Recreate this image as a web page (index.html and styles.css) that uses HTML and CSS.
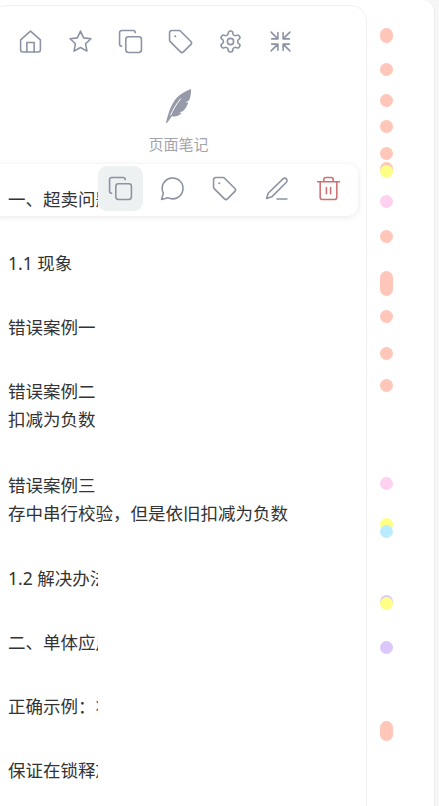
FILE: index.html
```html
<!DOCTYPE html>
<html>

<head>
	<title>页面笔记</title>
	<link rel="stylesheet" href="styles.css">
</head>

<body>
	<div class="shell">
		<div class="note-panel">
			<div class="head-icons">
				<button class="head-btn">
					<svg class="icon" viewBox="0 0 24 24"><path d="M2.5 10.5 12 2l9.500 8.500V20a2 2 0 0 1-2 2h-15a2 2 0 0 1-2-2z" /><path d="M8.500 22v-9h7v9" /></svg>
				</button>
				<button class="head-btn">
					<svg class="icon" viewBox="0 0 24 24"><path d="m12 2 3 6.500 7 .9-5.100 4.800 1.300 7L12 17.800l-6.200 3.400 1.300-7L2 9.400l7-.9z" /></svg>
				</button>
				<button class="head-btn">
					<svg class="icon" viewBox="0 0 24 24"><rect x="7.500" y="7.500" width="15" height="15" rx="2.500" /><path d="M3.500 16.500A2 2 0 0 1 1.500 14.500v-11a2 2 0 0 1 2-2h11a2 2 0 0 1 2 2" /></svg>
				</button>
				<button class="head-btn">
					<svg class="icon" viewBox="0 0 24 24"><path d="M1.500 3.500a2 2 0 0 1 2-2h7.200a2 2 0 0 1 1.400.6l9.900 9.900a2 2 0 0 1 0 2.800l-7.200 7.200a2 2 0 0 1-2.800 0l-9.900-9.900a2 2 0 0 1-.6-1.400z" /><circle class="solid" cx="7" cy="7" r="1" /></svg>
				</button>
				<button class="head-btn">
					<svg class="icon" viewBox="0 0 24 24"><path d="M12.220 2h-.44a2 2 0 0 0-2 2v.18a2 2 0 0 1-1 1.730l-.43.25a2 2 0 0 1-2 0l-.15-.08a2 2 0 0 0-2.730.73l-.22.38a2 2 0 0 0 .73 2.730l.15.1a2 2 0 0 1 1 1.720v.51a2 2 0 0 1-1 1.740l-.15.09a2 2 0 0 0-.73 2.730l.22.38a2 2 0 0 0 2.730.73l.15-.08a2 2 0 0 1 2 0l.43.25a2 2 0 0 1 1 1.730V20a2 2 0 0 0 2 2h.44a2 2 0 0 0 2-2v-.18a2 2 0 0 1 1-1.730l.43-.25a2 2 0 0 1 2 0l.15.08a2 2 0 0 0 2.730-.73l.22-.39a2 2 0 0 0-.73-2.730l-.15-.08a2 2 0 0 1-1-1.740v-.5a2 2 0 0 1 1-1.740l.15-.09a2 2 0 0 0 .73-2.730l-.22-.38a2 2 0 0 0-2.730-.73l-.15.08a2 2 0 0 1-2 0l-.43-.25a2 2 0 0 1-1-1.730V4a2 2 0 0 0-2-2z" /><circle cx="12" cy="12" r="3" /></svg>
				</button>
				<button class="head-btn">
					<svg class="icon" viewBox="0 0 24 24"><path d="M3 3l6.500 6.500M3.500 9.500h6v-6M21 3l-6.500 6.500M20.500 9.500h-6v-6M3 21l6.500-6.500M3.500 14.500h6v6M21 21l-6.500-6.500M20.500 14.500h-6v6" /></svg>
				</button>
			</div>

			<div class="note-title">
				<svg class="feather" viewBox="0 0 25 34">
					<path d="M0 34C2 25 5 15 11 8.500 15 4.500 20 2 25 0c.3 4-.5 8-2 11.500l-3.500 1.800 2.800.2c-1 3-2.700 6-5 8.500l-4 1.500 2.500.5c-3 3-6.500 4-10 3.300L1 34z" />
					<path class="slit" d="M4.500 26.500C7 21 10 15 15 9.500" />
				</svg>
				<div class="note-label">页面笔记</div>
			</div>

			<div class="float-bar">
				<button class="bar-btn active">
					<svg class="icon" viewBox="0 0 24 24"><rect x="7.500" y="7.500" width="15" height="15" rx="2.500" /><path d="M3.500 16.500A2 2 0 0 1 1.500 14.500v-11a2 2 0 0 1 2-2h11a2 2 0 0 1 2 2" /></svg>
				</button>
				<button class="bar-btn">
					<svg class="icon" viewBox="0 0 24 24"><path d="M7.500 20.800A10 10 0 1 0 3.200 16.500L1.500 22.500z" /></svg>
				</button>
				<button class="bar-btn">
					<svg class="icon" viewBox="0 0 24 24"><path d="M1.500 3.500a2 2 0 0 1 2-2h7.200a2 2 0 0 1 1.400.6l9.900 9.900a2 2 0 0 1 0 2.800l-7.200 7.200a2 2 0 0 1-2.800 0l-9.900-9.900a2 2 0 0 1-.6-1.400z" /><circle class="solid" cx="7" cy="7" r="1" /></svg>
				</button>
				<button class="bar-btn">
					<svg class="icon" viewBox="0 0 24 24"><path d="M18.500 2.500a2.300 2.300 0 0 1 3.200 3.200L7.500 20l-5 1.500L4 16.500z" /><path d="M12.500 22h9.500" /></svg>
				</button>
				<button class="bar-btn">
					<svg class="icon danger" viewBox="0 0 24 24"><path d="M1.500 5.500h21M7.500 5.500V3.500a2 2 0 0 1 2-2h5a2 2 0 0 1 2 2v2M4 5.500v15a2 2 0 0 0 2 2h12a2 2 0 0 0 2-2v-15M10 11v6M14 11v6" /></svg>
				</button>
			</div>

			<div class="doc">
				<p><span class="cut">一、超卖问题</span></p>
				<p><span class="cut">1.1 现象</span></p>
				<p><span class="cut">错误案例一</span></p>
				<p class="double"><span class="cut">错误案例二</span><br>扣减为负数</p>
				<p class="double"><span class="cut">错误案例三</span><br>存中串行校验，但是依旧扣减为负数</p>
				<p><span class="cut">1.2 解决办法</span></p>
				<p><span class="cut">二、单体应用</span></p>
				<p><span class="cut">正确示例：将</span></p>
				<p><span class="cut">保证在锁释放</span></p>
			</div>
		</div>

		<div class="marks">
			<div class="mark peach" style="top:28px;height:15px"></div>
			<div class="mark peach" style="top:63px"></div>
			<div class="mark peach" style="top:94px"></div>
			<div class="mark peach" style="top:120px"></div>
			<div class="mark peach" style="top:147px"></div>
			<div class="mark peach" style="top:162px"></div>
			<div class="mark yellow" style="top:165px"></div>
			<div class="mark pink" style="top:195px"></div>
			<div class="mark peach" style="top:230px"></div>
			<div class="mark peach" style="top:271px;height:25px"></div>
			<div class="mark peach" style="top:310px"></div>
			<div class="mark peach" style="top:347px"></div>
			<div class="mark peach" style="top:379px"></div>
			<div class="mark pink" style="top:477px"></div>
			<div class="mark yellow" style="top:518px"></div>
			<div class="mark blue" style="top:525px"></div>
			<div class="mark purple" style="top:595px"></div>
			<div class="mark yellow" style="top:597px"></div>
			<div class="mark purple" style="top:641px"></div>
			<div class="mark peach" style="top:721px;height:20px"></div>
		</div>
	</div>
</body>

</html>
```

FILE: styles.css
```css
* {
	box-sizing: border-box;
}

html,
body {
	height: 100%;
}

body {
	margin: 0;
	overflow: hidden;
	background-color: #f6f6f6;
	font-family: "Noto Sans", "Noto Sans CJK SC", sans-serif;
}

button {
	border: none;
	padding: 0;
	background: none;
}

.shell {
	display: flex;
	width: 435px;
	height: 100%;
	background-color: #fff;
	border-right: 1px solid #ececec;
	border-top-right-radius: 12px;
	overflow: hidden;
}

.note-panel {
	position: relative;
	flex: none;
	width: 377px;
	height: 900px;
	margin-top: 5px;
	margin-left: -10px;
	border: 1px solid #f0f0f0;
	border-radius: 16px;
	background-color: #fff;
}

.head-icons {
	display: flex;
	padding: 10px 0 0 14px;
}

.head-btn {
	display: flex;
	align-items: center;
	justify-content: center;
	width: 50px;
	height: 50px;
}

.icon {
	width: 25px;
	height: 25px;
	fill: none;
	stroke: #8b92a3;
	stroke-width: 1.5;
	stroke-linecap: round;
	stroke-linejoin: round;
}

.icon .solid {
	fill: #8b92a3;
	stroke: none;
}

.icon.danger {
	stroke: #cf6f6f;
}

.note-title {
	display: flex;
	flex-direction: column;
	align-items: center;
	padding-top: 23px;
}

.feather {
	width: 25px;
	height: 34px;
	fill: #969aa8;
}

.feather .slit {
	fill: none;
	stroke: #fff;
	stroke-width: 1;
}

.note-label {
	margin-top: 10px;
	font-size: 15px;
	line-height: 22px;
	color: #a1a4ab;
}

.float-bar {
	position: absolute;
	top: 158px;
	left: 0;
	right: 8px;
	display: flex;
	gap: 7px;
	height: 52px;
	padding: 2px 0 0 107px;
	background-color: #fff;
	border-radius: 10px;
	box-shadow: 0 1px 6px rgba(0, 0, 0, 0.1);
}

.bar-btn {
	display: flex;
	align-items: center;
	justify-content: center;
	width: 45px;
	height: 45px;
	border-radius: 9px;
}

.bar-btn.active {
	background-color: #eef1f2;
}

.doc {
	position: relative;
	margin-top: 30px;
	padding-left: 17px;
	font-size: 17.5px;
	line-height: 28px;
	color: #333;
}

.doc p {
	margin: 0 0 36px;
}

.doc p.double {
	margin-bottom: 37.5px;
}

.cut {
	display: inline-block;
	width: 90px;
	overflow: hidden;
	white-space: nowrap;
	vertical-align: top;
}

.marks {
	position: relative;
	flex: 1;
}

.mark {
	position: absolute;
	left: 13px;
	width: 13px;
	height: 13px;
	border-radius: 7px;
}

.peach {
	background-color: #ffc6b9;
}

.yellow {
	background-color: #ffff85;
}

.pink {
	background-color: #fed1f1;
}

.blue {
	background-color: #b9ecff;
}

.purple {
	background-color: #dcc6fb;
}
```
